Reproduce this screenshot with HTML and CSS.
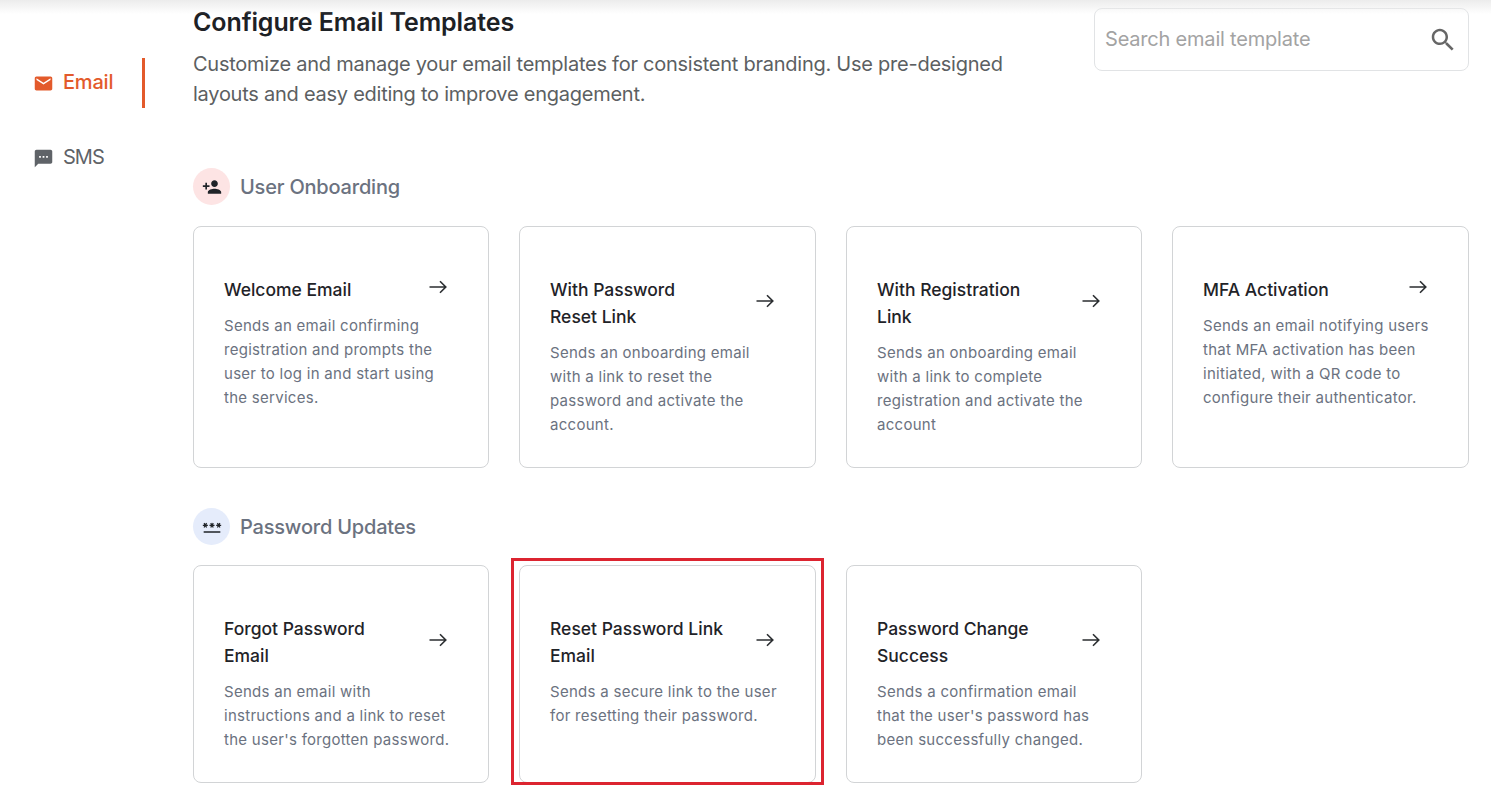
FILE: index.html
```html
<!DOCTYPE html>
<html>
<head>
  <meta charset="utf-8" />
  <title>Email templates</title>
  <link rel="stylesheet" href="styles.css">
</head>
<body>
  <svg class="sprite" xmlns="http://www.w3.org/2000/svg">
    <symbol id="arrow" viewBox="0 0 18 14">
      <path d="M0.5 7h16M11 1.2 16.8 7 11 12.8" fill="none" stroke="currentColor" stroke-width="1.6"/>
    </symbol>
  </svg>
  <div class="top-shade"></div>
  <div class="page">
    <aside class="side">
      <a class="side-item active">
        <svg class="side-icon" viewBox="0 0 24 24"><path fill="currentColor" d="M20 4H4c-1.1 0-1.99.9-1.99 2L2 18c0 1.1.9 2 2 2h16c1.1 0 2-.9 2-2V6c0-1.1-.9-2-2-2zm0 4l-8 5-8-5V6l8 5 8-5v2z"/></svg>
        <span class="side-label">Email</span>
      </a>
      <a class="side-item">
        <svg class="side-icon" viewBox="0 0 24 24"><path fill="currentColor" d="M20 2H4c-1.1 0-1.99.9-1.99 2L2 22l4-4h14c1.1 0 2-.9 2-2V4c0-1.1-.9-2-2-2zM9 11H7V9h2v2zm4 0h-2V9h2v2zm4 0h-2V9h2v2z"/></svg>
        <span class="side-label sms">SMS</span>
      </a>
    </aside>

    <main class="main">
      <div class="head">
        <div>
          <h1 class="title">Configure Email Templates</h1>
          <p class="sub">Customize and manage your email templates for consistent branding. Use pre-designed<br>layouts and easy editing to improve engagement.</p>
        </div>
        <div class="search">
          <span class="search-text">Search email template</span>
          <svg class="search-icon" viewBox="0 0 24 24"><path fill="currentColor" d="M15.5 14h-.79l-.28-.27C15.41 12.59 16 11.11 16 9.5 16 5.91 13.09 3 9.5 3S3 5.91 3 9.5 5.91 16 9.5 16c1.61 0 3.09-.59 4.23-1.57l.27.28v.79l5 4.99L20.49 19l-4.99-5zm-6 0C7.01 14 5 11.99 5 9.5S7.01 5 9.5 5 14 7.01 14 9.5 11.99 14 9.5 14z"/></svg>
        </div>
      </div>

      <div class="section-head first">
        <span class="badge pink"><svg viewBox="0 0 24 24"><path fill="currentColor" d="M15 12c2.21 0 4-1.79 4-4s-1.79-4-4-4-4 1.79-4 4 1.79 4 4 4zm-9-2V7H4v3H1v2h3v3h2v-3h3v-2H6zm9 4c-2.67 0-8 1.34-8 4v2h16v-2c0-2.66-5.33-4-8-4z"/></svg></span>
        User Onboarding
      </div>
      <div class="cards">
        <div class="card tall">
          <div class="card-top">
            <div class="card-title">Welcome Email</div>
            <svg class="arrow"><use href="#arrow"/></svg>
          </div>
          <p class="card-desc">Sends an email confirming<br>registration and prompts the<br>user to log in and start using<br>the services.</p>
        </div>
        <div class="card tall">
          <div class="card-top">
            <div class="card-title">With Password<br>Reset Link</div>
            <svg class="arrow"><use href="#arrow"/></svg>
          </div>
          <p class="card-desc">Sends an onboarding email<br>with a link to reset the<br>password and activate the<br>account.</p>
        </div>
        <div class="card tall">
          <div class="card-top">
            <div class="card-title">With Registration<br>Link</div>
            <svg class="arrow"><use href="#arrow"/></svg>
          </div>
          <p class="card-desc">Sends an onboarding email<br>with a link to complete<br>registration and activate the<br>account</p>
        </div>
        <div class="card tall">
          <div class="card-top">
            <div class="card-title">MFA Activation</div>
            <svg class="arrow"><use href="#arrow"/></svg>
          </div>
          <p class="card-desc">Sends an email notifying users<br>that MFA activation has been<br>initiated, with a QR code to<br>configure their authenticator.</p>
        </div>
      </div>

      <div class="section-head">
        <span class="badge blue"><svg viewBox="0 0 24 24"><path fill="currentColor" d="M2 17h20v2H2v-2zm1.15-4.05L4 11.47l.85 1.48 1.3-.75-.85-1.48H7v-1.5H5.3l.85-1.47L4.85 7 4 8.47 3.15 7l-1.3.75.85 1.47H1v1.5h1.7l-.85 1.48 1.3.75zm6.7-.75l1.3.75.85-1.48.85 1.48 1.3-.75-.85-1.48H15v-1.5h-1.7l.85-1.47-1.3-.75L12 8.47 11.15 7l-1.3.75.85 1.47H9v1.5h1.7l-.85 1.48zM23 9.22h-1.7l.85-1.47-1.3-.75L20 8.47 19.15 7l-1.3.75.85 1.47H17v1.5h1.7l-.85 1.48 1.3.75.85-1.48.85 1.48 1.3-.75-.85-1.48H23v-1.5z"/></svg></span>
        Password Updates
      </div>
      <div class="cards">
        <div class="card">
          <div class="card-top">
            <div class="card-title">Forgot Password<br>Email</div>
            <svg class="arrow"><use href="#arrow"/></svg>
          </div>
          <p class="card-desc">Sends an email with<br>instructions and a link to reset<br>the user's forgotten password.</p>
        </div>
        <div class="card marked">
          <div class="card-top">
            <div class="card-title">Reset Password Link<br>Email</div>
            <svg class="arrow"><use href="#arrow"/></svg>
          </div>
          <p class="card-desc">Sends a secure link to the user<br>for resetting their password.</p>
        </div>
        <div class="card">
          <div class="card-top">
            <div class="card-title">Password Change<br>Success</div>
            <svg class="arrow"><use href="#arrow"/></svg>
          </div>
          <p class="card-desc">Sends a confirmation email<br>that the user's password has<br>been successfully changed.</p>
        </div>
      </div>
    </main>
  </div>
</body>
</html>
```

FILE: styles.css
```css
html, body {
  margin: 0px;
  padding: 0px;
  height: 786px;
  overflow: hidden;
  background: #fff;
  font-family: "Inter", "Liberation Sans", sans-serif;
}
.sprite {
  display: none;
}
.top-shade {
  position: absolute;
  top: 0;
  left: 0;
  right: 0;
  height: 14px;
  background: linear-gradient(#ececec, rgba(255, 255, 255, 0));
  pointer-events: none;
}
.page {
  display: flex;
}

/* sidebar */
.side {
  width: 145px;
  margin-right: 48px;
  padding-top: 58px;
  display: flex;
  flex-direction: column;
  gap: 25px;
  flex-shrink: 0;
}
.side-item {
  height: 50px;
  box-sizing: border-box;
  padding-left: 33px;
  display: flex;
  align-items: center;
  gap: 9px;
  font-size: 20px;
  letter-spacing: -0.2px;
  color: #5f6368;
}
.side-item.active {
  color: #e35a2b;
  font-weight: 500;
  border-right: 3px solid #e35a2b;
}
.side-icon {
  width: 21px;
  height: 21px;
}
.side-label {
  margin-bottom: 2px;
}
.sms {
  letter-spacing: -1px;
}

/* main column */
.main {
  flex: 1;
  padding: 8px 22px 0 0;
  min-width: 0;
}
.head {
  display: flex;
  justify-content: space-between;
  align-items: flex-start;
}
.title {
  margin: -1px 0 0;
  font-size: 25px;
  line-height: 30px;
  font-weight: 600;
  letter-spacing: -0.1px;
  color: #1d2125;
}
.sub {
  margin: 12px 0 0;
  font-size: 20px;
  line-height: 30px;
  letter-spacing: -0.25px;
  color: #5c5f62;
}
.search {
  width: 375px;
  height: 63px;
  box-sizing: border-box;
  border: 1px solid #e1e3e5;
  border-radius: 8px;
  background: #fff;
  padding: 0 10px 0 10px;
  display: flex;
  align-items: center;
  justify-content: space-between;
}
.search-text {
  font-size: 20px;
  letter-spacing: -0.2px;
  color: #a3a3a3;
  margin-bottom: 2px;
}
.search-icon {
  width: 30px;
  height: 30px;
  color: #666;
}

.section-head {
  display: flex;
  align-items: center;
  gap: 10px;
  margin: 40px 0 20px;
  font-size: 20px;
  font-weight: 500;
  letter-spacing: -0.2px;
  color: #6b7280;
}
.section-head.first {
  margin-top: 59px;
  margin-bottom: 21px;
}
.badge {
  width: 37px;
  height: 37px;
  border-radius: 50%;
  display: flex;
  align-items: center;
  justify-content: center;
  color: #1f2328;
}
.badge svg {
  width: 20px;
  height: 20px;
}
.pink {
  background: #fde4e4;
}
.blue {
  background: #e5ecfb;
}

/* cards */
.cards {
  display: grid;
  grid-template-columns: 296px 297px 296px 297px;
  gap: 30px;
}
.card {
  position: relative;
  height: 218px;
  box-sizing: border-box;
  border: 1px solid #d2d4d6;
  border-radius: 8px;
  padding: 49px 30px 0;
}
.card.tall {
  height: 242px;
}
.card-top {
  display: flex;
  align-items: center;
  justify-content: space-between;
  padding-right: 11px;
}
.card-title {
  font-size: 17.5px;
  line-height: 27px;
  font-weight: 500;
  letter-spacing: 0;
  color: #1f2328;
}
.arrow {
  width: 18px;
  height: 14px;
  color: #2b2e31;
  position: relative;
  top: -2.5px;
}
.card-desc {
  margin: 11px 0 0;
  font-size: 15px;
  line-height: 24px;
  letter-spacing: 0.28px;
  color: #6b7280;
}
.marked::after {
  content: "";
  position: absolute;
  top: -8px;
  left: -9px;
  right: -9px;
  bottom: -3px;
  border: 3px solid #dc2430;
  pointer-events: none;
}
```
